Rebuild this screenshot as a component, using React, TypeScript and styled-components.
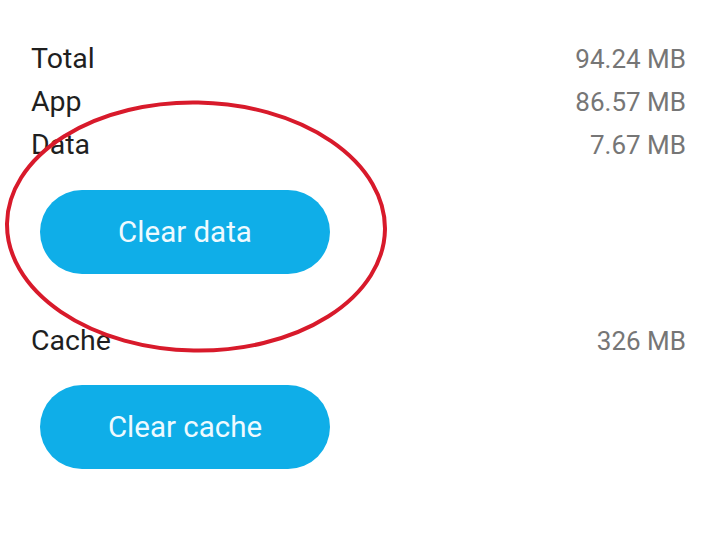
import React from 'react';
import styled, { createGlobalStyle } from "styled-components";

const GlobalStyle = createGlobalStyle`
  body {
    margin: 0;
    background: #ffffff;
    font-family: Roboto, "Noto Sans", sans-serif;
  }
`

type Item = { label: string; value: string };

const dataItems: Item[] = [
    { label: "Total", value: "94.24 MB" },
    { label: "App", value: "86.57 MB" },
    { label: "Data", value: "7.67 MB" },
];

export default function App() {
    return (
        <>
            <GlobalStyle/>
            <StyledStorage>
                {dataItems.map(item => (
                    <Row key={item.label}>
                        <Label>{item.label}</Label>
                        <Value>{item.value}</Value>
                    </Row>
                ))}
                <PillButton $top={24}>Clear data</PillButton>
                <Row $top={45}>
                    <Label>Cache</Label>
                    <Value>326 MB</Value>
                </Row>
                <PillButton $top={23}>Clear cache</PillButton>
                <Marker viewBox="0 0 717 544" aria-hidden>
                    <ellipse cx="196" cy="226.5" rx="189" ry="124" fill="none" stroke="#d81a2b" strokeWidth="4"
                             transform="rotate(1 196 226.5)"/>
                </Marker>
            </StyledStorage>
        </>
    );
}

const StyledStorage = styled.section`
  position: relative;
  width: 717px;
  height: 544px;
  box-sizing: border-box;
  padding: 37px 31px 0 31px;
  display: flex;
  flex-direction: column;
  overflow: hidden;
`

const Row = styled.div<{ $top?: number }>`
  display: flex;
  justify-content: space-between;
  align-items: center;
  height: 43px;
  margin-top: ${props => props.$top ?? 0}px;
`

const Label = styled.span`
  font-size: 28.5px;
  color: #1f1f1f;
`

const Value = styled.span`
  font-size: 26px;
  color: #767676;
`

const PillButton = styled.button<{ $top: number }>`
  width: 290px;
  height: 84px;
  margin: ${props => props.$top}px 0 0 9px;
  border: none;
  border-radius: 42px;
  background: #0faee8;
  color: #eefaff;
  font-family: Roboto, "Noto Sans", sans-serif;
  font-size: 29.5px;
  padding: 0;
`

const Marker = styled.svg`
  position: absolute;
  left: 0;
  top: 0;
  width: 717px;
  height: 544px;
  pointer-events: none;
`
